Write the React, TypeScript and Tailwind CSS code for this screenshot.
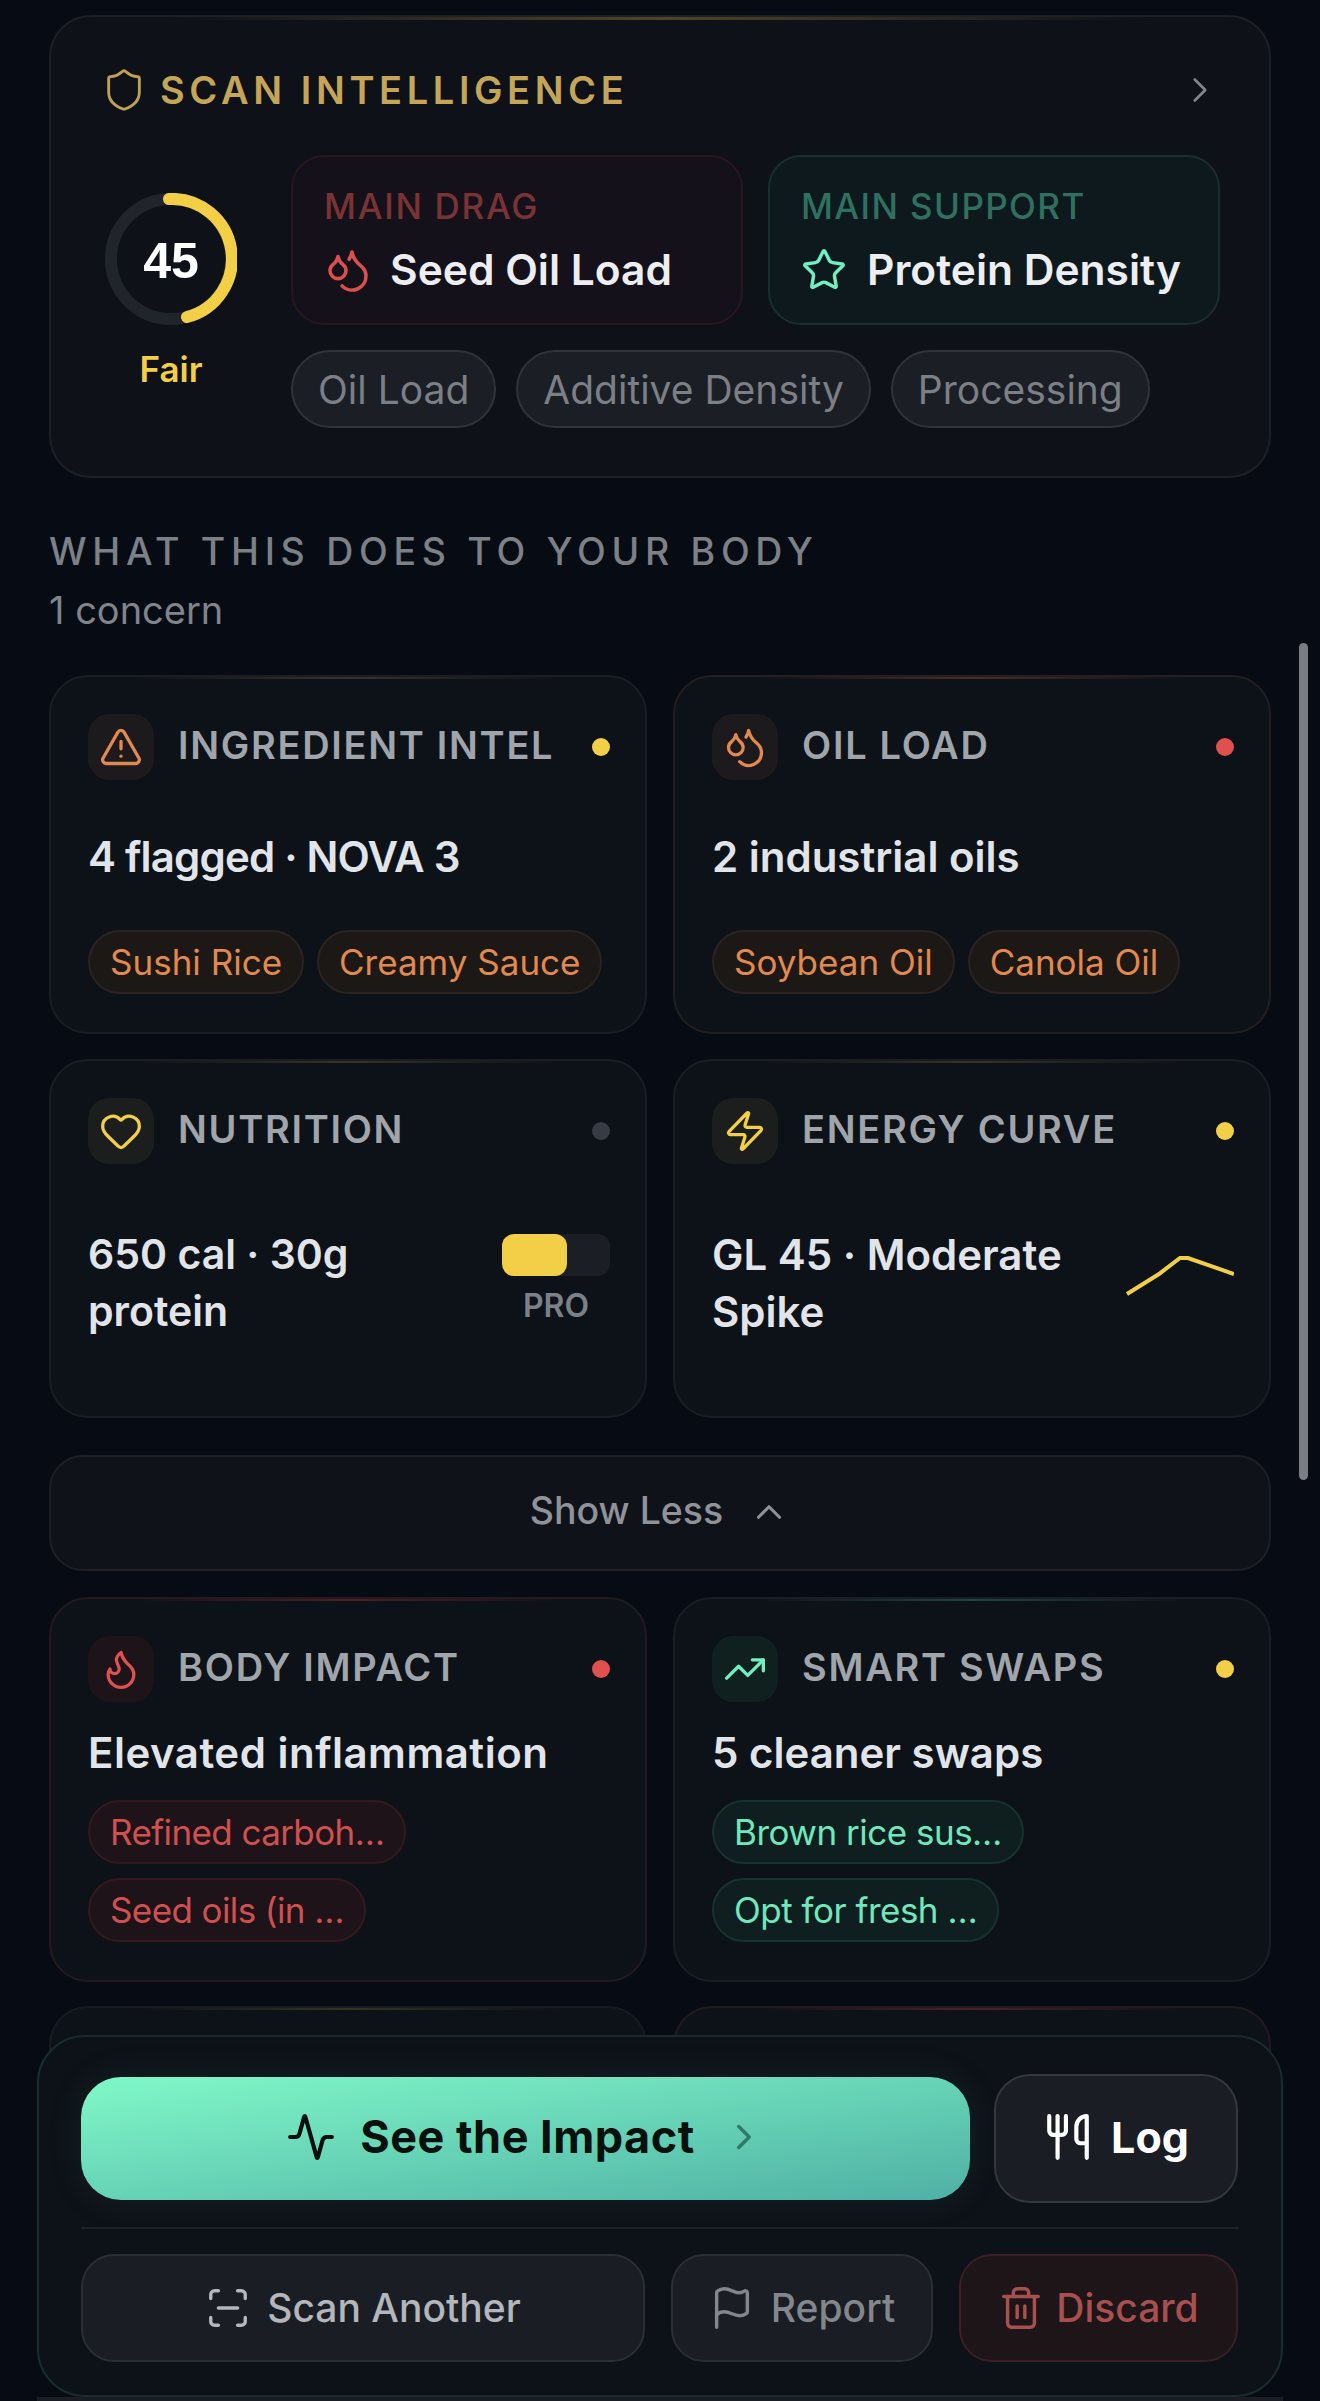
import { ReactNode } from "react";
import {
  Activity,
  ChevronRight,
  ChevronUp,
  Droplets,
  Flag,
  Flame,
  Heart,
  ScanLine,
  Shield,
  Star,
  Trash2,
  TrendingUp,
  TriangleAlert,
  Utensils,
  Zap,
} from "lucide-react";

type CardProps = {
  icon: ReactNode;
  iconBg: string;
  title: string;
  dot: string;
  border: string;
  glow: string;
  height: string;
  children: ReactNode;
};

function Card({ icon, iconBg, title, dot, border, glow, height, children }: CardProps) {
  return (
    <div className={`relative flex flex-col overflow-hidden rounded-[39px] border-2 bg-[#0d1118] pl-[37px] pr-[35px] pt-[37px] ${border} ${height}`}>
      <div className={`absolute left-[80px] right-[80px] top-0 h-[2px] bg-gradient-to-r from-transparent to-transparent ${glow}`} />
      <div className="flex items-center">
        <div className={`flex h-[66px] w-[66px] shrink-0 items-center justify-center rounded-[21px] ${iconBg}`}>{icon}</div>
        <span className="ml-[24px] mt-[-4px] flex-1 text-[38px] font-semibold leading-[44px] tracking-[1.7px] text-[#a0a4ab]">{title}</span>
        <span className={`h-[18px] w-[18px] rounded-full ${dot}`} />
      </div>
      {children}
    </div>
  );
}

function OrangeChip({ label }: { label: string }) {
  return (
    <span className="flex h-[64px] items-center rounded-full border-2 border-[#2b2320] bg-[#1c1816] px-[20px] text-[35px] leading-none text-[#e2894f]">
      {label}
    </span>
  );
}

function RedChip({ label }: { label: string }) {
  return (
    <span className="flex h-[64px] w-fit items-center rounded-full border-2 border-[#33191e] bg-[#1e1318] px-[20px] text-[35px] leading-none tracking-[-0.6px] text-[#d0504f]">
      {label}
    </span>
  );
}

function GreenChip({ label }: { label: string }) {
  return (
    <span className="flex h-[64px] w-fit items-center rounded-full border-2 border-[#17332f] bg-[#0f1e1f] px-[20px] text-[35px] leading-none tracking-[-0.5px] text-[#6fe8bd]">
      {label}
    </span>
  );
}

function Pill({ label }: { label: string }) {
  return (
    <span className="flex h-[78px] items-center rounded-full border-2 border-[#2f333a] bg-[#1b1e24] px-[25px] text-[39px] leading-none text-[#7b7f86]">
      {label}
    </span>
  );
}

export default function App() {
  return (
    <div className="relative h-[2401px] w-[1320px] overflow-hidden bg-[#070b14] font-['Inter',sans-serif]">
      <div className="flex flex-col px-[49px] pt-[15px]">
        {/* scan intelligence */}
        <section className="relative h-[463px] overflow-hidden rounded-[42px] border-2 border-[#1e2026] bg-[#0e1118] pl-[50px] pr-[48px] pt-[46px]">
          <div className="absolute left-[120px] right-[120px] top-0 h-[3px] bg-gradient-to-r from-transparent via-[#4f4429] to-transparent" />
          <div className="flex h-[54px] items-center">
            <Shield className="h-[46px] w-[46px] text-[#c0a052]" strokeWidth={1.5} />
            <span className="ml-[13px] flex-1 text-[38px] font-semibold leading-none tracking-[4.6px] text-[#c5a557]">SCAN INTELLIGENCE</span>
            <ChevronRight className="h-[42px] w-[42px] text-[#83868c]" strokeWidth={1.5} />
          </div>
          <div className="mt-[38px] flex">
            <div className="ml-[4px] flex w-[132px] shrink-0 flex-col items-center pt-[38px]">
              <div className="relative h-[132px] w-[132px]">
                <svg viewBox="0 0 132 132" className="h-[132px] w-[132px]">
                  <circle cx="66" cy="66" r="60" fill="none" stroke="#20242b" strokeWidth="12" />
                  <path d="M64 6 A60 60 0 0 1 82 124" fill="none" stroke="#f3cf48" strokeWidth="12" strokeLinecap="round" />
                </svg>
                <span className="absolute inset-0 flex items-center justify-center pt-[5px] font-['Liberation_Sans',sans-serif] text-[50px] font-bold text-white">45</span>
              </div>
              <span className="mt-[24px] text-[35px] font-semibold leading-[40px] text-[#f3cf48]">Fair</span>
            </div>
            <div className="ml-[54px] flex flex-col">
              <div className="flex gap-[25px]">
                <div className="flex h-[170px] w-[452px] flex-col rounded-[33px] border-2 border-[#2a171b] bg-[#15111a] pl-[31px] pt-[29px]">
                  <span className="text-[35px] font-medium leading-[40px] tracking-[1.7px] text-[#7a3335]">MAIN DRAG</span>
                  <div className="mt-[20px] flex items-center gap-[18px]">
                    <Droplets className="h-[48px] w-[48px] text-[#d9504d]" strokeWidth={1.8} />
                    <span className="text-[42.5px] font-semibold leading-[48px] text-[#eceef1]">Seed Oil Load</span>
                  </div>
                </div>
                <div className="flex h-[170px] w-[452px] flex-col rounded-[33px] border-2 border-[#14302f] bg-[#0d191d] pl-[31px] pt-[29px]">
                  <span className="text-[35px] font-medium leading-[40px] tracking-[1.4px] text-[#2f7060]">MAIN SUPPORT</span>
                  <div className="mt-[20px] flex items-center gap-[20px]">
                    <Star className="h-[46px] w-[46px] text-[#6ff0c2]" strokeWidth={1.8} />
                    <span className="text-[42.5px] font-semibold leading-[48px] text-[#eceef1]">Protein Density</span>
                  </div>
                </div>
              </div>
              <div className="mt-[25px] flex gap-[20px]">
                <Pill label="Oil Load" />
                <Pill label="Additive Density" />
                <Pill label="Processing" />
              </div>
            </div>
          </div>
        </section>

        {/* heading */}
        <h2 className="mt-[52px] text-[37.5px] font-medium leading-[44px] tracking-[5.7px] text-[#7c8087]">WHAT THIS DOES TO YOUR BODY</h2>
        <p className="mt-[14px] text-[38px] leading-[44px] text-[#80848b]">1 concern</p>

        <div className="mt-[43px] grid grid-cols-2 gap-x-[26px] gap-y-[25px]">
          <Card
            icon={<TriangleAlert className="h-[44px] w-[44px] text-[#e2894f]" strokeWidth={1.8} />}
            iconBg="bg-[#1c1a1c]"
            title="INGREDIENT INTEL"
            dot="bg-[#f3cf48]"
            border="border-[#1a1d24]"
            glow="via-[#3a3226]"
            height="h-[359px]"
          >
            <p className="mt-[48px] text-[42px] font-semibold leading-[57px] tracking-[-0.8px] text-[#e1e5ea]">4 flagged · NOVA 3</p>
            <div className="mt-[45px] flex gap-[13px]">
              <OrangeChip label="Sushi Rice" />
              <OrangeChip label="Creamy Sauce" />
            </div>
          </Card>
          <Card
            icon={<Droplets className="h-[44px] w-[44px] text-[#e2894f]" strokeWidth={1.8} />}
            iconBg="bg-[#1c1a1c]"
            title="OIL LOAD"
            dot="bg-[#e0504f]"
            border="border-[#241e1f]"
            glow="via-[#4a2c22]"
            height="h-[359px]"
          >
            <p className="mt-[48px] text-[42px] font-semibold leading-[57px] text-[#e1e5ea]">2 industrial oils</p>
            <div className="mt-[45px] flex gap-[13px]">
              <OrangeChip label="Soybean Oil" />
              <OrangeChip label="Canola Oil" />
            </div>
          </Card>
          <Card
            icon={<Heart className="h-[44px] w-[44px] text-[#f3cf48]" strokeWidth={1.8} />}
            iconBg="bg-[#1b1e1d]"
            title="NUTRITION"
            dot="bg-[#373b43]"
            border="border-[#1a1d24]"
            glow="via-[#37331f]"
            height="h-[359px]"
          >
            <div className="mt-[62px] flex justify-between">
              <p className="w-[300px] text-[41px] font-semibold leading-[57px] text-[#e1e5ea]">650 cal · 30g protein</p>
              <div className="flex flex-col items-center">
                <div className="mt-[8px] h-[42px] w-[108px] rounded-[12px] bg-[#1b1e24]">
                  <div className="h-[42px] w-[65px] rounded-[12px] bg-[#f3cf48]" />
                </div>
                <span className="mt-[10px] text-[32px] font-semibold leading-[40px] text-[#7c8087]">PRO</span>
              </div>
            </div>
          </Card>
          <Card
            icon={<Zap className="h-[44px] w-[44px] text-[#f3cf48]" strokeWidth={1.8} />}
            iconBg="bg-[#1b1e1d]"
            title="ENERGY CURVE"
            dot="bg-[#f3cf48]"
            border="border-[#1a1d24]"
            glow="via-[#37331f]"
            height="h-[359px]"
          >
            <div className="mt-[62px] flex justify-between">
              <p className="w-[380px] text-[42px] font-semibold leading-[57px] text-[#e1e5ea]">GL 45 · Moderate Spike</p>
              <svg viewBox="0 0 108 40" className="mt-[30px] h-[40px] w-[108px]" fill="none">
                <polyline points="1,38 33,18 54,2 62,2 108,18" stroke="#f3cf48" strokeWidth="4" />
              </svg>
            </div>
          </Card>
        </div>

        <button className="mt-[37px] flex h-[116px] items-center justify-center gap-[25px] rounded-[34px] border-2 border-[#1e2026] bg-[#0f1219] pb-[3px] text-[37.5px] font-medium text-[#8f9399]">
          Show Less
          <ChevronUp className="h-[42px] w-[42px]" strokeWidth={1.8} />
        </button>

        <div className="mt-[26px] grid grid-cols-2 gap-x-[26px] gap-y-[24px]">
          <Card
            icon={<Flame className="h-[44px] w-[44px] text-[#e0504f]" strokeWidth={1.8} />}
            iconBg="bg-[#1c1418]"
            title="BODY IMPACT"
            dot="bg-[#e0504f]"
            border="border-[#241a1e]"
            glow="via-[#4a2226]"
            height="h-[385px]"
          >
            <p className="mt-[22px] text-[42px] font-semibold leading-[57px] tracking-[0.5px] text-[#e1e5ea]">Elevated inflammation</p>
            <div className="mt-[19px] flex flex-col gap-[14px]">
              <RedChip label="Refined carboh…" />
              <RedChip label="Seed oils (in …" />
            </div>
          </Card>
          <Card
            icon={<TrendingUp className="h-[44px] w-[44px] text-[#6ff0c2]" strokeWidth={1.8} />}
            iconBg="bg-[#10201f]"
            title="SMART SWAPS"
            dot="bg-[#f3cf48]"
            border="border-[#1a1d24]"
            glow="via-[#1f4541]"
            height="h-[385px]"
          >
            <p className="mt-[22px] text-[42px] font-semibold leading-[57px] text-[#e1e5ea]">5 cleaner swaps</p>
            <div className="mt-[19px] flex flex-col gap-[14px]">
              <GreenChip label="Brown rice sus…" />
              <GreenChip label="Opt for fresh …" />
            </div>
          </Card>
          <div className="relative h-[100px] overflow-hidden rounded-t-[39px] border-2 border-[#181b21] bg-[#0d1118]">
            <div className="absolute left-[80px] right-[80px] top-0 h-[2px] bg-gradient-to-r from-transparent via-[#37331f] to-transparent" />
          </div>
          <div className="relative h-[100px] overflow-hidden rounded-t-[39px] border-2 border-[#241a1e] bg-[#0d1118]">
            <div className="absolute left-[80px] right-[80px] top-0 h-[2px] bg-gradient-to-r from-transparent via-[#4a2226] to-transparent" />
          </div>
        </div>
      </div>

      {/* scrollbar */}
      <div className="absolute left-[1299px] top-[643px] h-[837px] w-[9px] rounded-full bg-[#7a7d83]" />

      {/* sticky action bar */}
      <div className="absolute bottom-[4px] left-[37px] flex h-[362px] w-[1246px] flex-col rounded-[48px] border-2 border-[#1a2d2d] bg-[#0d1118] px-[42px] pt-[37px]">
        <div className="flex items-center gap-[24px]">
          <button className="flex h-[123px] w-[889px] items-center justify-center rounded-[40px] bg-gradient-to-br from-[#80f8c8] to-[#4fb0a4] pb-[3px] text-[45px] font-bold tracking-[0.5px] text-[#06100d] shadow-[0_0_40px_rgba(110,240,190,0.08)]">
            <Activity className="h-[50px] w-[50px]" strokeWidth={2} />
            <span className="ml-[24px]">See the Impact</span>
            <ChevronRight className="ml-[28px] h-[42px] w-[42px] text-[#2f7a68]" strokeWidth={2} />
          </button>
          <button className="flex h-[129px] w-[244px] items-center justify-center gap-[18px] rounded-[36px] border-2 border-[#33373e] bg-[#1a1d23] pb-[3px] text-[43px] font-bold text-white">
            <Utensils className="h-[50px] w-[50px]" strokeWidth={2} />
            Log
          </button>
        </div>
        <div className="mt-[24px] h-[2px] bg-[#1c2027]" />
        <div className="mt-[25px] flex gap-[26px]">
          <button className="flex h-[108px] w-[564px] items-center justify-center gap-[16px] rounded-[33px] border-2 border-[#2a2e35] bg-[#1a1d23] text-[39px] font-medium text-[#b3b6bb]">
            <ScanLine className="h-[46px] w-[46px]" strokeWidth={1.8} />
            Scan Another
          </button>
          <button className="flex h-[108px] w-[262px] items-center justify-center gap-[16px] rounded-[33px] border-2 border-[#2a2e35] bg-[#1a1d23] text-[39px] font-medium text-[#83868c]">
            <Flag className="h-[46px] w-[46px]" strokeWidth={1.8} />
            Report
          </button>
          <button className="flex h-[108px] w-[279px] items-center justify-center gap-[12px] rounded-[33px] border-2 border-[#3a2025] bg-[#1e1519] text-[39px] font-medium text-[#a84f50]">
            <Trash2 className="h-[46px] w-[46px]" strokeWidth={1.8} />
            Discard
          </button>
        </div>
      </div>
      <div className="absolute bottom-0 left-[37px] h-[4px] w-[1246px] bg-[#1a1d23]" />
    </div>
  );
}
